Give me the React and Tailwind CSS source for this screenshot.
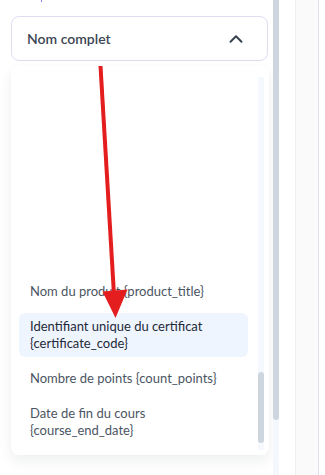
import { ChevronUp } from 'lucide-react';

const items = [
  { label: 'Nom du produit {product_title}' },
  { label: 'Identifiant unique du certificat {certificate_code}', lines: ['Identifiant unique du certificat', '{certificate_code}'], active: true },
  { label: 'Nombre de points {count_points}' },
  { label: 'Date de fin du cours {course_end_date}', lines: ['Date de fin du cours', '{course_end_date}'] },
];

export default function App() {
  return (
    <div
      className="relative w-[325px] h-[475px] overflow-hidden bg-white flex"
      style={{ fontFamily: 'Lato, "Open Sans", sans-serif' }}
    >
      {/* Left column: select + open dropdown */}
      <div className="w-[273px] flex flex-col">
        <div className="h-[2px] flex">
          <div className="ml-[41px] w-px bg-[#8b7cf6]" />
        </div>

        {/* Select trigger */}
        <div className="mt-[14px] ml-[11px] w-[257px] h-[45px] rounded-lg border border-[#e0dcf2] bg-white flex items-center justify-between pl-[15px] pr-[20px]">
          <span className="text-[14px] font-semibold text-[#3c4654]">Nom complet</span>
          <ChevronUp size={22} strokeWidth={2.2} className="text-[#3a4350]" />
        </div>

        {/* Dropdown panel */}
        <div className="mt-[5px] ml-[11px] w-[258px] h-[389px] rounded-lg bg-white shadow-[0_6px_14px_rgba(15,23,42,0.07)] flex pt-[11px] pb-[5px]">
          <div className="flex-1 flex flex-col justify-end gap-[8px] pl-[8px] pr-[10px] pb-[6px]">
            {items.map((item) => (
              <div
                key={item.label}
                className={`rounded-md px-[11px] py-[5px] text-[13px] leading-[17px] ${
                  item.active ? 'bg-[#eff5ff] text-[#1f2937]' : 'text-[#4b5563]'
                }`}
              >
                {item.lines ? item.lines.map((l) => <div key={l}>{l}</div>) : item.label}
              </div>
            ))}
          </div>
          {/* Inner scrollbar */}
          <div className="w-[6px] mr-[5px] bg-[#f5f8fc] flex flex-col justify-end pb-[7px]">
            <div className="h-[71px] rounded-full bg-[#cdd5df]" />
          </div>
        </div>
      </div>

      {/* Page scrollbar */}
      <div className="w-[6px] flex flex-col bg-[#f4f7fb]">
        <div className="h-[420px] rounded-b-full bg-[#cdd5df]" />
      </div>

      {/* Right edge */}
      <div className="w-[16px] bg-white" />
      <div className="w-px bg-[#efefef]" />
      <div className="w-[22px] bg-[#fafafa]" />
      <div className="w-px bg-[#e3def2]" />
      <div className="flex-1 bg-white" />

      {/* Red annotation arrow */}
      <svg className="absolute inset-0 pointer-events-none" width="325" height="475" viewBox="0 0 325 475">
        <line x1="100.5" y1="66" x2="114" y2="295" stroke="#e41e1e" strokeWidth="4" />
        <polygon points="102.5,291.5 127.5,289.5 115.5,318" fill="#e41e1e" />
      </svg>
    </div>
  );
}
